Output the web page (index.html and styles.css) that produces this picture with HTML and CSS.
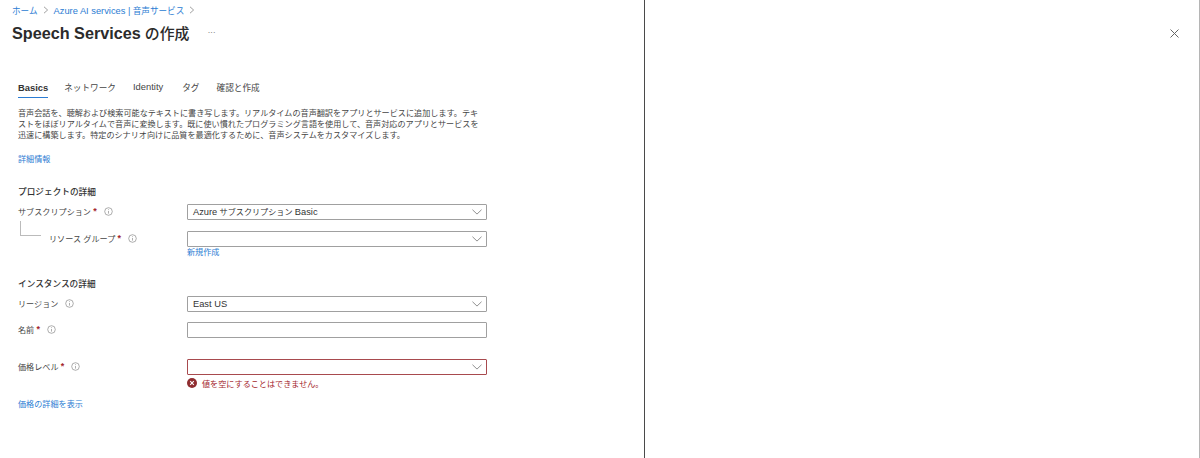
FILE: index.html
```html
<!DOCTYPE html>
<html lang="ja">
<head>
<meta charset="utf-8">
<title>Speech Services の作成</title>
<link rel="stylesheet" href="styles.css">
</head>
<body>
<main class="blade">
  <nav class="crumbs">
    <a>ホーム</a>
    <svg class="crumb-sep" viewBox="0 0 6 8"><path d="M1 .8 4.6 4 1 7.2"/></svg>
    <a><span class="latin">Azure AI services |</span> 音声サービス</a>
    <svg class="crumb-sep" viewBox="0 0 6 8"><path d="M1 .8 4.6 4 1 7.2"/></svg>
  </nav>
  <header class="title-row">
    <h1><span class="title-latin">Speech Services</span> の作成</h1>
    <span class="more">···</span>
  </header>
  <div class="content">
    <div class="tabs">
      <span class="tab latin active">Basics</span>
      <span class="tab jp">ネットワーク</span>
      <span class="tab latin plain">Identity</span>
      <span class="tab jp">タグ</span>
      <span class="tab jp">確認と作成</span>
    </div>
    <p class="intro">音声会話を、聴解および検索可能なテキストに書き写します。リアルタイムの音声翻訳をアプリとサービスに追加します。テキストをほぼリアルタイムで音声に変換します。既に使い慣れたプログラミング言語を使用して、音声対応のアプリとサービスを迅速に構築します。特定のシナリオ向けに品質を最適化するために、音声システムをカスタマイズします。</p>
    <a class="link more-info">詳細情報</a>

    <h2 class="section first">プロジェクトの詳細</h2>
    <div class="row r-sub">
      <div class="label">サブスクリプション <b>*</b><svg class="info" viewBox="0 0 9 9"><circle cx="4.5" cy="4.5" r="3.8"/><path d="M4.5 4v2.6M4.5 2.3v.8"/></svg></div>
      <div class="select"><span><span class="latin">Azure</span> サブスクリプション <span class="latin">Basic</span></span><svg class="chev" viewBox="0 0 11 6"><path d="M.5.5 5.5 5.3 10.5.5"/></svg></div>
    </div>
    <div class="row r-rg">
      <div class="label nested"><span class="tree"></span>リソース グループ <b>*</b><svg class="info" viewBox="0 0 9 9"><circle cx="4.5" cy="4.5" r="3.8"/><path d="M4.5 4v2.6M4.5 2.3v.8"/></svg></div>
      <div class="field">
        <div class="select"><svg class="chev" viewBox="0 0 11 6"><path d="M.5.5 5.5 5.3 10.5.5"/></svg></div>
        <a class="link new">新規作成</a>
      </div>
    </div>

    <h2 class="section second">インスタンスの詳細</h2>
    <div class="row r-region">
      <div class="label">リージョン<svg class="info" viewBox="0 0 9 9"><circle cx="4.5" cy="4.5" r="3.8"/><path d="M4.5 4v2.6M4.5 2.3v.8"/></svg></div>
      <div class="select"><span class="latin">East US</span><svg class="chev" viewBox="0 0 11 6"><path d="M.5.5 5.5 5.3 10.5.5"/></svg></div>
    </div>
    <div class="row r-name">
      <div class="label">名前 <b>*</b><svg class="info" viewBox="0 0 9 9"><circle cx="4.5" cy="4.5" r="3.8"/><path d="M4.5 4v2.6M4.5 2.3v.8"/></svg></div>
      <div class="select"></div>
    </div>
    <div class="row r-price">
      <div class="label">価格レベル <b>*</b><svg class="info" viewBox="0 0 9 9"><circle cx="4.5" cy="4.5" r="3.8"/><path d="M4.5 4v2.6M4.5 2.3v.8"/></svg></div>
      <div class="field">
        <div class="select invalid"><svg class="chev" viewBox="0 0 11 6"><path d="M.5.5 5.5 5.3 10.5.5"/></svg></div>
        <div class="error"><svg class="err-icon" viewBox="0 0 10 10"><circle cx="5" cy="5" r="5"/><path d="M3.2 3.2 6.8 6.8M6.8 3.2 3.2 6.8"/></svg>値を空にすることはできません。</div>
      </div>
    </div>
    <a class="link price-link">価格の詳細を表示</a>
  </div>
</main>
<aside class="side">
  <svg class="close" viewBox="0 0 9 9"><path d="M.5.5 8.5 8.5M8.5.5.5 8.5"/></svg>
</aside>
</body>
</html>
```
FILE: styles.css
```css
* { box-sizing: border-box; }
html, body { height: 100%; }
body {
  margin: 0;
  display: flex;
  height: 458px;
  overflow: hidden;
  background: #fff;
  color: #333;
  font-family: "Liberation Sans", "Noto Sans CJK JP", sans-serif;
  font-size: 8.12px;
}
.latin { font-size: 9.3px; }
.blade {
  width: 645px;
  flex: none;
  border-right: 1px solid #4a4a4a;
  padding: 4px 0 0 12px;
}
.side {
  flex: 1;
  border-right: 1px solid #b5b5b5;
  padding: 29px 0 0 525px;
}
.close { display: block; width: 9px; height: 9px; }
.close path { fill: none; stroke: #666; stroke-width: 1; }

.crumbs {
  display: flex;
  align-items: center;
  height: 11px;
  color: #2b7cd3;
  font-size: 8.6px;
}
.crumb-sep { width: 6px; height: 8px; margin: 0 5px 0 5px; }
.crumb-sep path { fill: none; stroke: #888; stroke-width: .8; }

.title-row {
  display: flex;
  align-items: center;
  height: 20px;
  margin-top: 7px;
}
h1 {
  margin: 0;
  font-size: 14.9px;
  font-weight: 500;
  color: #2b2b2b;
}
.title-latin { font-size: 16.2px; font-weight: 700; }
.more { margin-left: 18px; color: #888; font-size: 9px; letter-spacing: -.4px; }

.content { padding: 40px 0 0 6px; width: 480px; }
.tabs { display: flex; gap: 17px; height: 16px; }
.tab { font-size: 8.65px; color: #444; height: 16px; line-height: 11px; white-space: nowrap; }
.tab.jp { padding-top: 1px; }
.tab.latin { font-size: 9.4px; }
.tab.plain { padding-right: 2px; margin-top: -1px; }
.tab.active { font-weight: 700; color: #333; border-bottom: 1px solid #2b7cd3; margin-right: -1px; }
.intro {
  margin: 10px 0 0;
  width: 464px;
  line-height: 11px;
  color: #444;
}
.link { color: #2b7cd3; display: block; line-height: 11px; }
.more-info { margin-top: 13px; }
.section {
  margin: 0;
  font-size: 8.67px;
  font-weight: 500;
  color: #333;
  line-height: 11px;
}
.section.first { margin-top: 22px; }
.section.second { margin-top: 21px; }

.row { display: flex; align-items: flex-start; }
.label {
  width: 169px;
  flex: none;
  height: 14px;
  display: flex;
  align-items: center;
  color: #444;
  white-space: pre;
}
.label b { color: #a4262c; font-weight: 700; font-size: 9px; }
.info { width: 9px; height: 9px; margin-left: 7px; }
.info circle, .info path { fill: none; stroke: #777; stroke-width: .6; }
.nested { padding-left: 31px; position: relative; }
.tree {
  position: absolute;
  left: 2px;
  top: -10px;
  width: 21px;
  height: 15px;
  border-left: 1px solid #bbb;
  border-bottom: 1px solid #bbb;
}
.field { width: 300px; flex: none; }
.select {
  width: 300px;
  flex: none;
  height: 16px;
  border: 1px solid #a0a0a0;
  border-radius: 1px;
  padding: 0 4px 0 5px;
  line-height: 14px;
  color: #333;
  display: flex;
  align-items: center;
  justify-content: space-between;
  white-space: pre;
}
.chev { width: 10px; height: 6px; margin-left: auto; }
.chev path { fill: none; stroke: #666; stroke-width: .8; }
.select.invalid { border-color: #a84a4e; }
.r-sub { margin-top: 6px; }
.r-rg { margin-top: 11px; }
.r-region { margin-top: 6px; }
.r-name { margin-top: 10px; }
.r-price { margin-top: 21px; }
.error {
  display: flex;
  align-items: center;
  color: #a4262c;
  height: 12px;
  margin-top: 2px;
}
.err-icon { width: 10px; height: 10px; margin-right: 5px; }
.err-icon circle { fill: #8f2d30; }
.err-icon path { stroke: #fff; stroke-width: 1.1; fill: none; }
.price-link { margin-top: 10px; }
```
